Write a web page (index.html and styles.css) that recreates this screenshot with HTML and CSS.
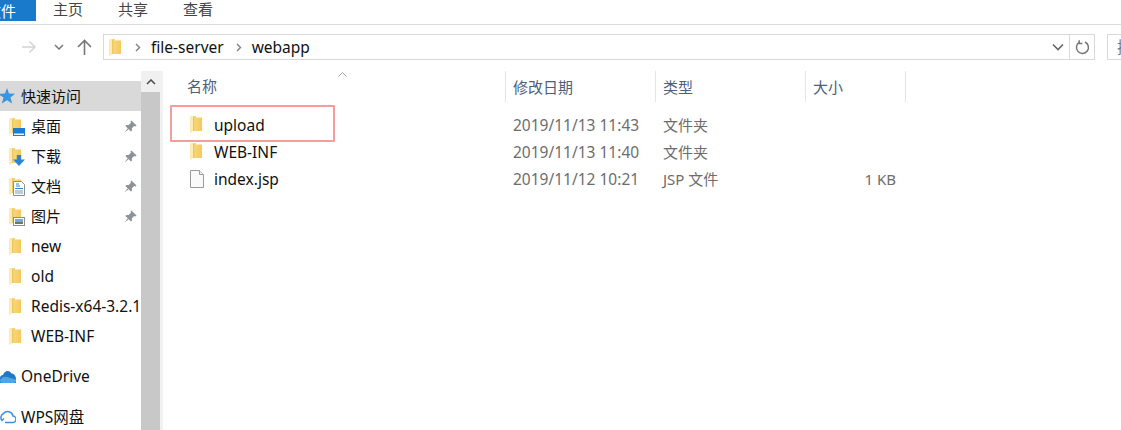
FILE: index.html
```html
<html>
<head>
    <meta charset="UTF-8">
    <title>webapp</title>
    <link rel="stylesheet" href="styles.css">
</head>
<body>
    <svg class="defs" width="0" height="0">
        <defs>
            <linearGradient id="folder-fill" x1="0" y1="0" x2="1" y2="0">
                <stop offset="0" stop-color="#f9dd8a"/>
                <stop offset="1" stop-color="#f5c95a"/>
            </linearGradient>
            <symbol id="folder" viewBox="0 0 12 17">
                <path d="M0 0 H6 V1.5 H12 V15 H0 Z" fill="url(#folder-fill)"/>
                <path d="M0 0 L3.5 0 L3.5 15 L1 17 L0 16 Z" fill="#fcecb4"/>
                <path d="M3.7 0.5 V15" stroke="#e8bc50" stroke-width="0.9"/>
            </symbol>
            <symbol id="pin" viewBox="0 0 14 14">
                <path d="M8 0.5 L13.5 6 L12.3 7 L11 6.5 L8.5 9 L8.5 11.5 L7.5 12.5 L1.5 6.5 L2.5 5.5 L5 5.5 L7.5 3 L7 1.7 Z" fill="#8d9399"/>
                <path d="M4 9 L0.5 13.5 L5 10 Z" fill="#8d9399"/>
            </symbol>
        </defs>
    </svg>

    <div class="ribbon">
        <div class="tab-file"><span>文件</span></div>
        <div class="tab">主页</div>
        <div class="tab">共享</div>
        <div class="tab">查看</div>
    </div>

    <div class="address-row">
        <div class="nav-btns">
            <svg class="nav-forward" width="16" height="14" viewBox="0 0 16 14"><path d="M1 7 H14 M8.5 1.5 L14 7 L8.5 12.5" fill="none" stroke="#d4d4d4" stroke-width="1.5"/></svg>
            <svg class="nav-down" width="10" height="6" viewBox="0 0 10 6"><path d="M1 1 L5 5 L9 1" fill="none" stroke="#777" stroke-width="1.5"/></svg>
            <svg class="nav-up" width="15" height="16" viewBox="0 0 15 16"><path d="M7.5 16 V2 M1 8 L7.5 1.5 L14 8" fill="none" stroke="#777" stroke-width="1.6"/></svg>
        </div>
        <div class="address-box">
            <svg class="addr-folder" width="12" height="17"><use href="#folder"/></svg>
            <svg class="crumb-arrow" width="6" height="9" viewBox="0 0 6 9"><path d="M1 1 L4.5 4.5 L1 8" fill="none" stroke="#808080" stroke-width="1.4"/></svg>
            <span class="crumb">file-server</span>
            <svg class="crumb-arrow" width="6" height="9" viewBox="0 0 6 9"><path d="M1 1 L4.5 4.5 L1 8" fill="none" stroke="#808080" stroke-width="1.4"/></svg>
            <span class="crumb">webapp</span>
            <svg class="addr-drop" width="12" height="8" viewBox="0 0 12 8"><path d="M1 1.5 L6 6.5 L11 1.5" fill="none" stroke="#666" stroke-width="1.6"/></svg>
            <div class="addr-refresh">
                <svg width="15" height="15" viewBox="0 0 15 15"><path d="M4.5 2.2 A6 6 0 1 0 10 2 M4.2 0.2 V3.6 H7.4" fill="none" stroke="#777" stroke-width="1.5"/></svg>
            </div>
        </div>
        <div class="search-box">搜</div>
    </div>

    <div class="main">
        <div class="sidebar">
            <div class="side-item selected top">
                <svg width="17" height="16" viewBox="0 0 17 16" class="top-icon star"><path d="M9 0 L11 5.6 L17 5.8 L12.4 9.6 L14.2 15.5 L9 12.2 L3.8 15.5 L5.6 9.6 L0 5.8 L7 5.6 Z" fill="#3a94e0"/></svg>
                <span class="cjk">快速访问</span>
            </div>
            <div class="side-item">
                <span class="folder-wrap">
                    <svg width="12" height="17"><use href="#folder"/></svg>
                    <svg class="overlay" width="12" height="8" viewBox="0 0 12 8"><rect width="12" height="8" fill="#1a7fd4"/><rect x="1" y="5.5" width="10" height="1.5" fill="#e8f2fb"/></svg>
                </span>
                <span class="cjk">桌面</span>
                <svg class="pin" width="13" height="13"><use href="#pin"/></svg>
            </div>
            <div class="side-item">
                <span class="folder-wrap">
                    <svg width="12" height="17"><use href="#folder"/></svg>
                    <svg class="overlay" width="12" height="11" viewBox="0 0 11 10"><path d="M3.5 0 H7.5 V4 H11 L5.5 10 L0 4 H3.5 Z" fill="#2b86d8"/></svg>
                </span>
                <span class="cjk">下载</span>
                <svg class="pin" width="13" height="13"><use href="#pin"/></svg>
            </div>
            <div class="side-item">
                <span class="folder-wrap">
                    <svg width="12" height="17"><use href="#folder"/></svg>
                    <svg class="overlay doc" width="12" height="15" viewBox="0 0 12 15"><path d="M0.5 0.5 H8.5 L11.5 3.5 V14.5 H0.5 Z" fill="#fff" stroke="#8f8f8f"/><path d="M3 3 H6 M3 5 H7 M2 7.5 H10" stroke="#2f86d4"/><path d="M2 10 H10 M2 12 H10" stroke="#6f9cc0"/></svg>
                </span>
                <span class="cjk">文档</span>
                <svg class="pin" width="13" height="13"><use href="#pin"/></svg>
            </div>
            <div class="side-item">
                <span class="folder-wrap">
                    <svg width="12" height="17"><use href="#folder"/></svg>
                    <svg class="overlay" width="12" height="9" viewBox="0 0 12 9"><rect x="0.5" y="0.5" width="11" height="8" fill="#fff" stroke="#8f8f8f"/><rect x="2" y="2" width="8" height="2.5" fill="#7aa8d0"/><rect x="2" y="4.5" width="8" height="2.5" fill="#5f8066"/></svg>
                </span>
                <span class="cjk">图片</span>
                <svg class="pin" width="13" height="13"><use href="#pin"/></svg>
            </div>
            <div class="side-item">
                <span class="folder-wrap"><svg width="12" height="17"><use href="#folder"/></svg></span>
                <span>new</span>
            </div>
            <div class="side-item">
                <span class="folder-wrap"><svg width="12" height="17"><use href="#folder"/></svg></span>
                <span>old</span>
            </div>
            <div class="side-item">
                <span class="folder-wrap"><svg width="12" height="17"><use href="#folder"/></svg></span>
                <span>Redis-x64-3.2.100</span>
            </div>
            <div class="side-item">
                <span class="folder-wrap"><svg width="12" height="17"><use href="#folder"/></svg></span>
                <span>WEB-INF</span>
            </div>
            <div class="side-item top group">
                <svg width="16" height="13" viewBox="0 0 16 13" class="top-icon"><path d="M0 13 V8 C0 6 1.5 5 3 5 C4 1 9 -1 11.5 3.5 C14 3.5 16 6 16 9 L16 13 Z" fill="#1c78c8"/><path d="M0 10 C2 7 4 6 7 7 L16 9.5 V11 C16 12 15 13 14 13 H2 C1 13 0 12 0 10 Z" fill="#4aa8ea"/></svg>
                <span>OneDrive</span>
            </div>
            <div class="side-item top group">
                <svg width="16" height="16" viewBox="0 0 16 16" class="top-icon"><path d="M5 14.5 H12.5 A3 3 0 0 0 13 8 A5.5 5.5 0 0 0 3.5 5.5 A4.5 4.5 0 0 0 2 12.5 L4 10.5" fill="none" stroke="#3d8fe0" stroke-width="1.5"/></svg>
                <span>WPS网盘</span>
            </div>
        </div>

        <div class="scrollbar">
            <div class="scroll-btn">
                <svg width="10" height="6" viewBox="0 0 10 6"><path d="M1 5 L5 1 L9 5" fill="none" stroke="#505050" stroke-width="1.6"/></svg>
            </div>
            <div class="scroll-thumb"></div>
        </div>

        <div class="files">
            <svg class="sort-caret" width="9" height="5" viewBox="0 0 9 5"><path d="M0.5 4.5 L4.5 0.5 L8.5 4.5" fill="none" stroke="#a0a0a0"/></svg>
            <div class="file-head">
                <div class="col-name">名称</div>
                <div class="col-date">修改日期</div>
                <div class="col-type">类型</div>
                <div class="col-size">大小</div>
            </div>
            <div class="file-row first">
                <div class="col-name">
                    <svg width="12" height="17"><use href="#folder"/></svg>
                    <span class="file-name">upload</span>
                </div>
                <div class="col-date">2019/11/13 11:43</div>
                <div class="col-type">文件夹</div>
                <div class="col-size"></div>
            </div>
            <div class="file-row">
                <div class="col-name">
                    <svg width="12" height="17"><use href="#folder"/></svg>
                    <span class="file-name">WEB-INF</span>
                </div>
                <div class="col-date">2019/11/13 11:40</div>
                <div class="col-type">文件夹</div>
                <div class="col-size"></div>
            </div>
            <div class="file-row">
                <div class="col-name">
                    <svg width="14" height="18" viewBox="0 0 14 18" class="jsp-icon"><path d="M0.5 0.5 H9.5 L13.5 4.5 V17.5 H0.5 Z" fill="#fafafa" stroke="#9b9b9b"/><path d="M9.5 0.5 V4.5 H13.5" fill="#eee" stroke="#9b9b9b"/></svg>
                    <span class="file-name">index.jsp</span>
                </div>
                <div class="col-date">2019/11/12 10:21</div>
                <div class="col-type">JSP 文件</div>
                <div class="col-size">1 KB</div>
            </div>
            <div class="highlight"></div>
        </div>
    </div>
</body>
</html>
```

FILE: styles.css
```css
html, body {
    margin: 0;
    padding: 0;
    background-color: #fff;
}

body {
    width: 1121px;
    height: 430px;
    overflow: hidden;
    font-family: "Noto Sans", "Noto Sans CJK SC", sans-serif;
    font-size: 15.5px;
    color: #111;
}

svg {
    display: block;
    flex-shrink: 0;
}

.defs {
    position: absolute;
}

/* ribbon */
.ribbon {
    display: flex;
    height: 24px;
    border-bottom: 1px solid #dcdcdc;
    font-size: 15px;
}

.tab-file {
    width: 36px;
    height: 21px;
    background-color: #1979ca;
    color: #fff;
    display: flex;
    justify-content: flex-end;
    align-items: center;
    overflow: hidden;
    margin-right: 17px;
}

.tab-file span {
    margin-right: 20px;
    white-space: nowrap;
}

.tab {
    width: 30px;
    margin-right: 35px;
    line-height: 19px;
    color: #444;
}

/* address bar */
.address-row {
    display: flex;
    align-items: center;
    height: 26px;
    margin-top: 9px;
}

.nav-btns {
    display: flex;
    align-items: center;
    width: 103px;
    flex-shrink: 0;
}

.nav-forward {
    margin-left: 21px;
}

.nav-down {
    margin-left: 17px;
}

.nav-up {
    margin-left: 13px;
}

.address-box {
    width: 992px;
    height: 26px;
    box-sizing: border-box;
    border: 1px solid #d9d9d9;
    display: flex;
    align-items: center;
    flex-shrink: 0;
}

.addr-folder {
    margin-left: 5px;
    margin-right: 14px;
}

.crumb {
    margin: 0 12px 0 10px;
}

.addr-drop {
    margin-left: auto;
    margin-right: 5px;
}

.addr-refresh {
    width: 24px;
    height: 24px;
    border-left: 1px solid #d9d9d9;
    display: flex;
    align-items: center;
    justify-content: center;
}

.search-box {
    width: 40px;
    height: 26px;
    box-sizing: border-box;
    margin-left: 12px;
    border: 1px solid #d9d9d9;
    color: #777;
    line-height: 24px;
    padding-left: 9px;
    flex-shrink: 0;
}

/* main area */
.main {
    display: flex;
    height: 370px;
    margin-top: 11px;
}

.sidebar {
    width: 141px;
    padding-top: 10px;
    overflow: hidden;
    flex-shrink: 0;
}

.side-item {
    display: flex;
    align-items: center;
    height: 30px;
    padding-left: 9px;
    white-space: nowrap;
}

.side-item.selected {
    background-color: #d9d9d9;
}

.side-item.top {
    padding-left: 0;
}

.side-item.group {
    margin-top: 10px;
}

.cjk {
    font-size: 15px;
    line-height: 18px;
}

.top-icon {
    margin-right: 5px;
}

.star {
    margin-left: -2px;
    margin-right: 6px;
}

.folder-wrap {
    position: relative;
    width: 22px;
    height: 17px;
    flex-shrink: 0;
}

.overlay {
    position: absolute;
    left: 4px;
    bottom: -1px;
}

.pin {
    margin-left: auto;
    margin-right: 4px;
}

.scrollbar {
    width: 19px;
    display: flex;
    flex-direction: column;
    flex-shrink: 0;
}

.scroll-btn {
    height: 21px;
    background-color: #f0f0f0;
    display: flex;
    align-items: center;
    justify-content: center;
}

.scroll-thumb {
    flex: 1;
    background-color: #c8c8c8;
}

/* file list */
.files {
    position: relative;
    flex: 1;
    border-left: 3px solid #f2f2f2;
}

.sort-caret {
    position: absolute;
    left: 175px;
    top: 1px;
}

.file-head {
    display: flex;
    height: 31px;
    align-items: stretch;
    color: #4c607a;
    font-size: 15px;
    line-height: 33px;
}

.file-head > div {
    border-right: 1px solid #e5e5e5;
}

.col-name {
    width: 343px;
    padding-left: 24px;
    display: flex;
    align-items: center;
    box-sizing: border-box;
    flex-shrink: 0;
}

.col-date, .col-type {
    width: 150px;
    padding-left: 7px;
    box-sizing: border-box;
    flex-shrink: 0;
}

.col-size {
    width: 100px;
    padding-left: 7px;
    box-sizing: border-box;
    flex-shrink: 0;
}

.file-row {
    display: flex;
    align-items: center;
    height: 27px;
    color: #6d6d6d;
    font-size: 15px;
}

.file-row.first {
    margin-top: 9px;
}

.file-row .col-name {
    padding-left: 27px;
    color: #111;
    font-size: 15.5px;
}

.file-row .col-date {
    font-size: 15.5px;
    white-space: nowrap;
}

.file-row .col-size {
    text-align: right;
    padding-right: 10px;
}

.file-name {
    margin-left: 12px;
}

.jsp-icon + .file-name {
    margin-left: 10px;
}

.highlight {
    position: absolute;
    left: 7px;
    top: 34px;
    width: 165px;
    height: 37px;
    box-sizing: border-box;
    border: 2px solid #f59c9c;
    border-radius: 1px;
}
```
